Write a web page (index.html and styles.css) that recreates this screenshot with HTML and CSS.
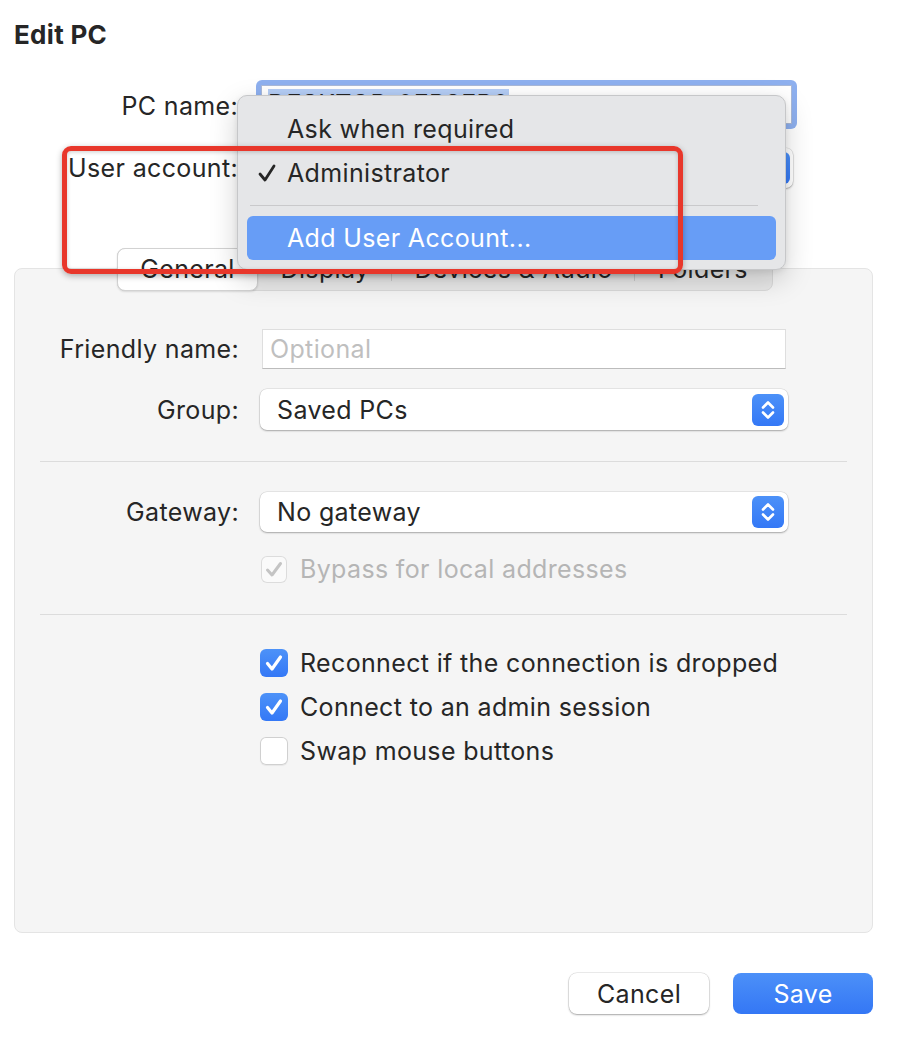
FILE: index.html
```html
<!DOCTYPE html>
<html>
  <head>
    <title>Edit PC</title>
    <link rel="stylesheet" href="styles.css">
  </head>
  <body>
    <div class="dialog">
      <h1 class="title">Edit PC</h1>

      <div class="top-form">
        <div class="top-row row-name">
          <label class="top-label">PC name:</label>
          <div class="focus-ring">
            <div class="name-field"><span class="selection">DESKTOP-0EP3EP0</span></div>
          </div>
        </div>
        <div class="top-row row-account">
          <label class="top-label">User account:</label>
          <div class="popup popup-account">
            <span>Administrator</span>
            <span class="stepper">
              <svg width="32" height="32" viewBox="0 0 32 32"><path d="M11 13.5 L16 8.5 L21 13.5 M11 18.5 L16 23.5 L21 18.5" fill="none" stroke="#fff" stroke-width="2.6" stroke-linecap="round" stroke-linejoin="round"/></svg>
            </span>
          </div>
        </div>
      </div>

      <div class="panel">
        <div class="tabs">
          <div class="tab tab-general selected">General</div>
          <div class="tab tab-display">Display</div>
          <div class="tab tab-devices">Devices &amp; Audio</div>
          <div class="tab tab-folders">Folders</div>
        </div>

        <div class="panel-body">
          <div class="form-row row-friendly">
            <label class="form-label">Friendly name:</label>
            <div class="text-field placeholder">Optional</div>
          </div>
          <div class="form-row row-group">
            <label class="form-label">Group:</label>
            <div class="popup popup-wide">
              <span>Saved PCs</span>
              <span class="stepper">
                <svg width="32" height="32" viewBox="0 0 32 32"><path d="M11 13.5 L16 8.5 L21 13.5 M11 18.5 L16 23.5 L21 18.5" fill="none" stroke="#fff" stroke-width="2.6" stroke-linecap="round" stroke-linejoin="round"/></svg>
              </span>
            </div>
          </div>

          <div class="divider divider-first"></div>

          <div class="form-row row-gateway">
            <label class="form-label">Gateway:</label>
            <div class="popup popup-wide">
              <span>No gateway</span>
              <span class="stepper">
                <svg width="32" height="32" viewBox="0 0 32 32"><path d="M11 13.5 L16 8.5 L21 13.5 M11 18.5 L16 23.5 L21 18.5" fill="none" stroke="#fff" stroke-width="2.6" stroke-linecap="round" stroke-linejoin="round"/></svg>
              </span>
            </div>
          </div>
          <div class="check-row row-bypass disabled">
            <span class="checkbox checkbox-disabled">
              <svg width="26" height="27" viewBox="0 0 26 27"><path d="M6.5 14 L11 19 L19.5 7.5" fill="none" stroke="#c4c4c4" stroke-width="3" stroke-linecap="round" stroke-linejoin="round"/></svg>
            </span>
            <span>Bypass for local addresses</span>
          </div>

          <div class="divider divider-second"></div>

          <div class="check-row row-first">
            <span class="checkbox checked">
              <svg width="28" height="28" viewBox="0 0 28 28"><path d="M7.5 14.5 L12 20 L20.5 8" fill="none" stroke="#fff" stroke-width="3.2" stroke-linecap="round" stroke-linejoin="round"/></svg>
            </span>
            <span>Reconnect if the connection is dropped</span>
          </div>
          <div class="check-row">
            <span class="checkbox checked">
              <svg width="28" height="28" viewBox="0 0 28 28"><path d="M7.5 14.5 L12 20 L20.5 8" fill="none" stroke="#fff" stroke-width="3.2" stroke-linecap="round" stroke-linejoin="round"/></svg>
            </span>
            <span>Connect to an admin session</span>
          </div>
          <div class="check-row">
            <span class="checkbox"></span>
            <span>Swap mouse buttons</span>
          </div>
        </div>
      </div>

      <div class="buttons">
        <button class="btn btn-cancel">Cancel</button>
        <button class="btn btn-save">Save</button>
      </div>

      <div class="menu">
        <div class="menu-item">Ask when required</div>
        <div class="menu-item">
          <span class="menu-check">
            <svg width="18" height="20" viewBox="0 0 18 20"><path d="M2 11 L7 17 L16 3" fill="none" stroke="#262626" stroke-width="2.8" stroke-linecap="round" stroke-linejoin="round"/></svg>
          </span>
          Administrator
        </div>
        <div class="menu-separator"></div>
        <div class="menu-item highlighted">Add User Account...</div>
      </div>

      <div class="annotation"></div>
    </div>
  </body>
</html>
```

FILE: styles.css
```css
* {
  box-sizing: border-box;
}

body {
  margin: 0;
  background: #fff;
  font-family: Inter, "Noto Sans", sans-serif;
  font-size: 25px;
  letter-spacing: 0.35px;
  color: #262626;
}

.dialog {
  position: relative;
  width: 910px;
  height: 1040px;
  padding: 0 37px 0 14px;
  overflow: hidden;
}

.title {
  margin: 0;
  padding-top: 19px;
  font-size: 26px;
  font-weight: 700;
  line-height: 32px;
  letter-spacing: 0.3px;
}

/* top form */

.top-row {
  display: flex;
  align-items: center;
}

.row-name {
  margin-top: 29px;
  height: 49px;
}

.row-account {
  margin-top: 19px;
  height: 40px;
}

.top-label {
  width: 224px;
  text-align: right;
}

.row-name .top-label {
  padding-top: 3px;
}

.focus-ring {
  margin-left: 18px;
  width: 541px;
  height: 49px;
  padding: 5px;
  border-radius: 6px;
  background: #8eb0ef;
}

.name-field {
  height: 39px;
  background: #fff;
  border: 1px solid #a9b9d8;
  padding: 3px 0 0 6px;
  line-height: 30px;
  white-space: nowrap;
  overflow: hidden;
}

.selection {
  background: #b4cdf5;
  color: #262626;
}

.popup {
  display: flex;
  align-items: center;
  justify-content: space-between;
  height: 40px;
  padding: 0 4px 0 17px;
  background: #fff;
  border-radius: 7px;
  box-shadow: 0 0 0 0.5px rgba(0, 0, 0, 0.12), 0 1px 2px rgba(0, 0, 0, 0.28);
}

.popup-account {
  margin-left: 22px;
  width: 533px;
  padding-right: 3px;
}

.stepper {
  display: block;
  width: 32px;
  height: 32px;
  border-radius: 6px;
  background: linear-gradient(#4c91f8, #3478f6);
}

.stepper svg {
  display: block;
}

/* panel */

.panel {
  margin-top: 80px;
  height: 665px;
  background: #f5f5f5;
  border: 1px solid #e4e4e4;
  border-radius: 8px;
}

.tabs {
  display: flex;
  align-items: center;
  margin: -21px 0 0 102px;
  width: 656px;
  height: 43px;
  background: #e8e8e8;
  border: 1px solid #dadada;
  border-radius: 8px;
}

.tab {
  position: relative;
  height: 41px;
  line-height: 41px;
  text-align: center;
}

.tab-general { width: 141px; }
.tab-display { width: 134px; }
.tab-devices { width: 243px; }
.tab-folders { width: 136px; }

.tab.selected {
  margin: -1px 0 0 -1px;
  height: 43px;
  background: #fff;
  border: 1px solid #d2d2d2;
  border-radius: 8px;
  box-shadow: 0 1px 2px rgba(0, 0, 0, 0.12);
}

.tab-devices::before,
.tab-folders::before {
  content: "";
  position: absolute;
  left: -1px;
  top: 10px;
  height: 22px;
  border-left: 1px solid #cccccc;
}

.panel-body {
  padding-top: 38px;
}

.form-row {
  display: flex;
  align-items: center;
}

.form-label {
  width: 224px;
  text-align: right;
}

.row-friendly {
  height: 40px;
}

.row-group {
  margin-top: 20px;
  height: 41px;
}

.row-gateway {
  margin-top: 30px;
  height: 40px;
}

.text-field {
  margin-left: 23px;
  width: 524px;
  height: 40px;
  padding-left: 7px;
  line-height: 38px;
  background: #fff;
  border: 1px solid #dedede;
  border-bottom-color: #bcbcbc;
}

.placeholder {
  color: #bfbfbf;
}

.popup-wide {
  margin-left: 21px;
  width: 528px;
}

.row-group .popup-wide {
  height: 41px;
}

.divider {
  margin: 0 25px;
  height: 1px;
  background: #dcdcdc;
}

.divider-first {
  margin-top: 31px;
}

.divider-second {
  margin-top: 31px;
}

.check-row {
  display: flex;
  align-items: center;
  gap: 12px;
  margin-top: 16px;
  padding-left: 245px;
  height: 28px;
}

.row-bypass {
  margin-top: 23px;
  padding-left: 246px;
  gap: 13px;
}

.row-first {
  margin-top: 34px;
}

.disabled {
  color: #b5b5b5;
}

.checkbox {
  display: block;
  flex: none;
  width: 28px;
  height: 28px;
  background: #fff;
  border-radius: 6px;
  box-shadow: 0 0 0 1px #d0d0d0 inset, 0 1px 1px rgba(0, 0, 0, 0.06);
}

.checkbox svg {
  display: block;
}

.checkbox.checked {
  background: linear-gradient(#4d92f8, #3478f6);
  box-shadow: none;
}

.checkbox-disabled {
  width: 26px;
  height: 27px;
  background: #fafafa;
  box-shadow: 0 0 0 1px #dcdcdc inset;
}

/* buttons */

.buttons {
  display: flex;
  justify-content: flex-end;
  gap: 24px;
  margin-top: 40px;
}

.btn {
  width: 140px;
  height: 41px;
  font-family: inherit;
  font-size: 25px;
  letter-spacing: inherit;
  border: none;
  border-radius: 8px;
  cursor: pointer;
}

.btn-cancel {
  background: #fff;
  color: #262626;
  box-shadow: 0 0 0 0.5px rgba(0, 0, 0, 0.14), 0 1px 2px rgba(0, 0, 0, 0.3);
}

.btn-save {
  background: linear-gradient(#4c90f8, #3477f5);
  color: #fff;
}

/* open popup menu */

.menu {
  position: absolute;
  left: 237px;
  top: 95px;
  width: 549px;
  height: 175px;
  padding: 11px 0 0 0;
  background: #e5e6e8;
  border: 1px solid #c6c7c9;
  border-radius: 10px;
  box-shadow: 0 10px 28px rgba(0, 0, 0, 0.18), 0 2px 6px rgba(0, 0, 0, 0.08);
}

.menu-item {
  position: relative;
  margin: 0 9px;
  height: 44px;
  line-height: 44px;
  padding-left: 40px;
  border-radius: 6px;
}

.menu-check {
  position: absolute;
  left: 11px;
  top: 12px;
}

.menu-check svg {
  display: block;
}

.menu-separator {
  margin: 10px 27px 10px 12px;
  height: 1px;
  background: #c9c9cb;
}

.menu-item.highlighted {
  background: #679df6;
  color: #fff;
}

/* red annotation box */

.annotation {
  position: absolute;
  left: 62px;
  top: 146px;
  width: 621px;
  height: 128px;
  border: 5px solid #e8372b;
  border-radius: 9px;
  box-shadow: 0 2px 6px rgba(0, 0, 0, 0.3), inset 0 1px 4px rgba(0, 0, 0, 0.2);
}
```
